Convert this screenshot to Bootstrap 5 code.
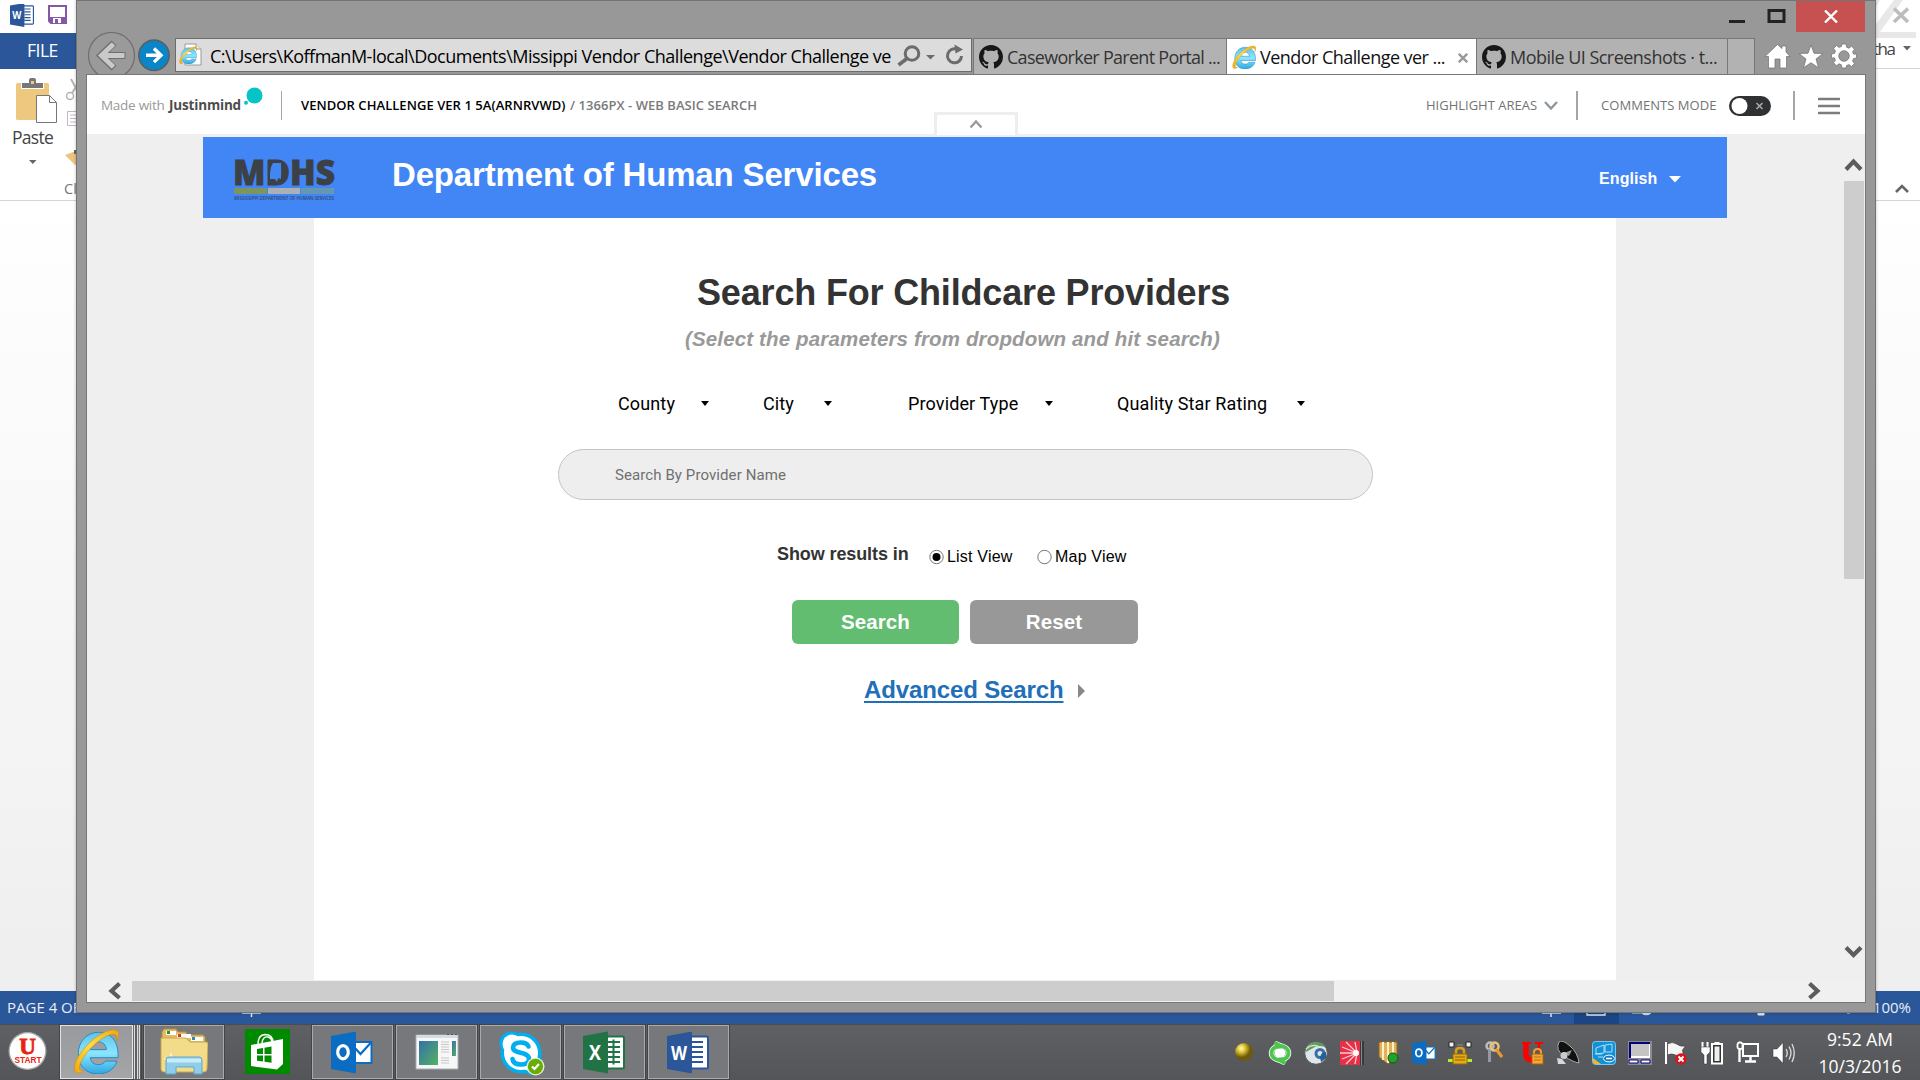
<!DOCTYPE html>
<html lang="en">
<head>
<meta charset="utf-8">
<title>Vendor Challenge ver 1 5a</title>
<link href="https://cdn.jsdelivr.net/npm/bootstrap@5.3.0/dist/css/bootstrap.min.css" rel="stylesheet">
<style>
html,body{width:1920px;height:1080px;overflow:hidden;margin:0}
body{font-family:"Open Sans","Noto Sans",sans-serif;background:#fff;color:#000}
svg{display:block;flex:none}
span,a,h1,h2,p{white-space:nowrap;margin:0}
.ari{font-family:"Liberation Sans",Arial,sans-serif}
.rob{font-family:Roboto,sans-serif}
/* word window behind */
.wordwin{width:1920px;height:1024px;background:linear-gradient(#fff 200px,#efefef 960px)}
.wtitle{height:33px;background:#fff;padding-left:9px}
.wlogo{margin:4px 13px 0 0}
.wsave{margin:5px 0 0}
.wfile{width:77px;height:36px;background:#2b579a;color:#fff;padding-left:27px;font-size:17.5px;line-height:35px;letter-spacing:-.5px}
.wribbon{height:132px;background:#fff;border-bottom:1px solid #d4d4d4}
.wribbon svg:first-child{margin-top:1px}
.wpaste{padding-left:12px;margin-top:-6px;height:26px;line-height:27px;font-size:17.5px;letter-spacing:-.73px;color:#444}
.wstatus{height:33px;background:#2a569a;color:#e9eef6;font-size:15px;line-height:33px;padding:0 9px 0 7px}
.wright{left:1876px;top:0;width:44px;height:201px}
.wpeek{left:230px;top:1012px}
/* browser window */
.iewin{left:76px;top:0;width:1800px;height:1013px;background:#989898;border:1px solid #747474;box-shadow:0 0 3px rgba(0,0,0,.25)}
.iecap{height:37px;padding-right:10px}
.ieclose{width:69px;height:31px;background:#c75050}
.ienav{height:36px;padding-left:11px}
.ieback{margin-top:-6px}
.addr{width:797px;height:34px;border:1px solid #6c6c6c;background:#dcdcdc;padding-left:3px}
.addr svg:first-child{margin-top:4px}
.addrtxt{width:683px;font-size:18px;line-height:35px;margin-left:7px;letter-spacing:-.485px}
.ietab{height:36px;border:1px solid #777;border-bottom:0;background:#b2b2b2;color:#333;font-size:18px;line-height:37px;padding-left:5px;width:252px;margin-left:-1px;letter-spacing:-.53px}
.ietab svg:first-child{margin:6px 4px 0 0}
.ietab.first{width:254px;margin-left:1px;letter-spacing:-.715px}
.ietab.on{width:251px;background:#fff;color:#111;letter-spacing:-.55px}
.ietab.stub{width:28px;padding:0}
.tabx{margin:14px 0 0 13px}
.iebody{margin:0 9px;height:929px;border:1px solid #777;background:#fff}
.jmbar{height:59px;background:#fff;font-size:13px;padding:2px 0 0 14px}
.jmlogo{width:180px;font-size:13.5px}
.jmdot{margin:-8px 0 0 2px}
.jm1{width:68px;color:#999;letter-spacing:-.27px}
.jm2{color:#4c4c4c;font-weight:700;letter-spacing:-.17px}
.jm3{font-weight:600;margin-left:19px;width:269px;letter-spacing:.055px}
.jm4{font-weight:600;color:#7a7a7a;width:856px;letter-spacing:.041px}
.jm5{color:#737373;width:118px}
.jm6{color:#737373;margin-left:23px;width:128px;letter-spacing:.052px}
.vline{width:1px;height:29px;background:#a5a5a5}
.vline2{width:2px;height:29px;background:#a5a5a5}
.colltab{left:934px;top:112px;width:84px;height:23px;border:3px solid #eee;border-bottom:0;background:#fff}
.canvas{height:846px;background:#efefef}
.bluebar{margin:3px 0 0 116px;width:1524px;height:81px;background:#4285f5;color:#fff}
.mdhs{margin:21px 0 0 31px}
.dept{font-weight:700;font-size:33px;line-height:44px;margin:16px 0 0 57px;width:1207px;letter-spacing:-.166px}
.lang{font-weight:700;font-size:16px;line-height:20px;margin:32px 0 0;width:70px;letter-spacing:.1px}
.sheet{margin-left:227px;width:1302px;height:762px;background:#fff}
.sheet h1{font-size:36px;line-height:44px;font-weight:700;color:#333;padding:53px 0 0 383px;letter-spacing:-.17px}
.sheet h2{font-size:20.5px;line-height:26px;font-weight:700;font-style:italic;color:#999;padding:11px 0 0 371px;letter-spacing:.146px}
.filters{margin:40px 0 0 304px;font-size:18px;line-height:24px;letter-spacing:.13px}
.srch{margin:33px 0 0 244px;width:815px;height:51px;border:1px solid #c4c4c4;border-radius:26px;background:#eee;color:#707070;font-size:15px;line-height:51px;padding:0 0 0 56px;letter-spacing:.09px}
.modes{margin:42px 0 0 463px;height:30px}
.modes svg{margin-top:7px}
.showin{font-weight:700;font-size:18px;line-height:24px;color:#333;width:152px;letter-spacing:-.1px}
.modes .opt{font-size:16px;line-height:24px;margin:3px 0 0 2px;letter-spacing:.2px;width:90px}
.acts{margin:28px 0 0 478px}
.actbtn{height:44px;border:0;border-radius:6px;color:#fff;font-weight:700;font-size:20.5px;line-height:36px;padding:0;text-align:center;letter-spacing:.1px}
.bsearch,.bsearch:hover{width:167px;background:#62bd70;margin-right:11px}
.breset,.breset:hover{width:168px;background:#989898}
.adv{margin:31px 0 0 550px}
.advlink{color:#1f70b8;font-weight:700;font-size:24px;line-height:30px;letter-spacing:-.13px;text-decoration:underline;text-decoration-thickness:2px;text-underline-offset:3px;text-decoration-skip-ink:none}
.advtri{margin:9px 0 0 15px}
.vscroll{width:21px;background:#efefef}
.hscroll{height:22px;background:#f0f0f0}
.thumb{background:#cdcdcd}
.vthumb{height:398px;width:20px}
.hthumb{width:1202px;height:20px;margin-right:472px}
/* taskbar */
.tbar{height:56px;background:linear-gradient(#5f6063,#545558);border-top:1px solid #4b4c4f}
.tbtn{width:81px;height:54px;margin-right:3px;background:#77787b;border:1px solid #a9aaac;outline:1px solid #434447;padding-left:18px}
.tbtn.cur{width:73px;margin:0;background:linear-gradient(#999a9d,#a4a5a7);border-color:#e4e4e4;padding:2px 0 0 12px}
.tbtn.expl{width:80px;margin-right:21px;padding:2px 0 0 15px}
.store{margin:4px 22px 0 0}
.tray{gap:12px;padding-top:16px}
.tclock{color:#fff;font-size:17.5px;line-height:27px;width:100px;margin:1px 10px 0 14px}
</style>
</head>
<body class="position-relative">

<svg width="0" height="0" class="position-absolute">
  <defs>
    <linearGradient id="gblue" x1="0" y1="0" x2="0" y2="1"><stop offset="0" stop-color="#5cc3ee"/><stop offset=".5" stop-color="#8ae6fd"/><stop offset="1" stop-color="#2ea7e2"/></linearGradient>
    <linearGradient id="ggold" x1="0" y1="1" x2="1" y2="0"><stop offset="0" stop-color="#f2a80c"/><stop offset=".5" stop-color="#ffdc4a"/><stop offset="1" stop-color="#f0a90f"/></linearGradient>
    <symbol id="ie" viewBox="0 0 48 48">
      <path d="M47 31H18c.6 4.800 4 7.200 8.300 7.200 3.400 0 6-1.200 7.500-3.700h12C43 43.500 35.500 48 26 48 14.500 48 5.500 40 5.500 27S14.500 4.500 26.500 4.500C39.500 4.500 48 14 47 31zM18.200 22.500h16.600c-.3-4.700-3.600-8-8.200-8-4.700 0-7.800 3-8.400 8z" fill="url(#gblue)" stroke="#2787bd" stroke-width="1"/>
      <path d="M11 45C6.500 48.500 2.300 47.500 1.500 43 .5 35 9.500 21.500 21 12 32 3 43.500-.5 46.800 3.500c1.600 2.300.9 6-.9 10 .2-3.500.2-5.500-1.500-6.500C40.500 5 32 9 24 16 14 24.500 6.500 36 6.800 41.500c.1 2.800 2 3.800 4.200 3.500z" fill="url(#ggold)" stroke="#c78a10" stroke-width=".6"/>
    </symbol>
    <symbol id="gh" viewBox="0 0 16 16"><path fill="#171717" d="M8 0C3.580 0 0 3.580 0 8c0 3.540 2.290 6.530 5.470 7.590.4.07.55-.17.55-.38 0-.19-.01-.82-.01-1.490-2.010.37-2.530-.49-2.690-.94-.09-.23-.48-.94-.82-1.130-.28-.15-.68-.52-.01-.53.63-.01 1.080.58 1.230.82.72 1.210 1.870.87 2.330.66.07-.52.28-.87.51-1.070-1.780-.2-3.640-.89-3.640-3.950 0-.87.31-1.590.82-2.150-.08-.2-.36-1.020.08-2.120 0 0 .67-.21 2.200.82.64-.18 1.320-.27 2-.27s1.360.09 2 .27c1.530-1.040 2.200-.82 2.200-.82.44 1.100.16 1.920.08 2.120.51.56.82 1.270.82 2.150 0 3.070-1.870 3.750-3.650 3.950.29.25.54.73.54 1.480 0 1.070-.01 1.930-.01 2.200 0 .21.15.46.55.38A8.010 8.010 0 0 0 16 8c0-4.420-3.580-8-8-8z"/></symbol>
    <symbol id="outl" viewBox="0 0 42 42"><path d="M24 10.500h16.500v21H24z" fill="#fff" stroke="#0a6fc4" stroke-width="2"/><path d="M24.500 17l5 5.500L40 11" fill="none" stroke="#0a6fc4" stroke-width="2.200"/><path d="M0 4.500L25 0v42L0 37.500z" fill="#0a6dc3"/><ellipse cx="12" cy="20.700" rx="5.300" ry="6.600" fill="none" stroke="#fff" stroke-width="3.200"/></symbol>
    <symbol id="word" viewBox="0 0 42 42"><path d="M24 5h15.500q1.500 0 1.500 1.500v29q0 1.500-1.500 1.500H24z" fill="#fff" stroke="#2b579a" stroke-width="2"/><path d="M25 10.500h11M25 15.500h11M25 20.500h11M25 25.500h11M25 30.500h11" stroke="#2b579a" stroke-width="2"/><path d="M0 4.500L25 0v42L0 37.500z" fill="#2b579a"/><text x="4" y="28.500" font-family="Open Sans" font-weight="700" font-size="19" fill="#fff" textLength="16" lengthAdjust="spacingAndGlyphs">W</text></symbol>
    <linearGradient id="gpic" x1="0" y1="0" x2="1" y2="1"><stop offset="0" stop-color="#3570a8"/><stop offset="1" stop-color="#52b262"/></linearGradient>
    <radialGradient id="gau" cx=".35" cy=".3"><stop offset="0" stop-color="#fffbd0"/><stop offset=".4" stop-color="#e6cb3a"/><stop offset="1" stop-color="#6e5a08"/></radialGradient>
  </defs>
</svg>

<!-- Word window -->
<div class="wordwin d-flex flex-column">
  <div class="wtitle d-flex align-items-start">
    <svg width="26" height="26" class="wlogo"><use href="#word" x="1" y="-1" width="24" height="24"/></svg>
    <svg width="19" height="19" viewBox="0 0 19 19" class="wsave"><path d="M1 1h17v17H3l-2-2z" fill="#fff" stroke="#8558a6" stroke-width="2"/><path d="M1 12h17v6H3l-2-2z" fill="#8558a6"/><path d="M5 13h8v5H5z" fill="#fff"/><path d="M7 14h3v4H7z" fill="#8558a6"/></svg>
  </div>
  <div class="wfile"><span>FILE</span></div>
  <div class="wribbon">
    <svg width="77" height="60" viewBox="0 0 77 60">
      <rect x="16" y="13" width="33" height="37" rx="1.500" fill="#edc87e"/><path d="M21 13h6v-3q0-2 2-2h7q2 0 2 2v3h6v6H21z" fill="#fff"/><path d="M22 13h7v-3q0-2 2-2h3q2 0 2 2v3h7v5H22z" fill="#777"/><path d="M31 11h3v3h-3z" fill="#edc87e"/>
      <path d="M36.500 25.500h13l7 7v20h-20z" fill="#fff" stroke="#777"/><path d="M49.500 25.500v7h7" fill="none" stroke="#777"/>
      <circle cx="70" cy="26" r="3.500" fill="none" stroke="#b5b5b5" stroke-width="1.500"/><path d="M71 9l7 13M79 12l-7 11" stroke="#b5b5b5" stroke-width="2"/>
      <path d="M67.500 41.500h12v14h-12zM70 45h6M70 48.500h8M70 52h8" fill="none" stroke="#c0b8c4"/>
    </svg>
    <div class="wpaste"><span>Paste</span></div>
    <svg width="77" height="49" viewBox="0 0 77 49"><path d="M29 10h7.500l-3.700 4z" fill="#666"/><path d="M65 5l8-3 4 1v12h-2z" fill="#edc47e"/><path d="M74 0h4v4h-4z" fill="#666"/><text x="64" y="43.500" font-size="14.500" fill="#777" font-family="Open Sans">Cl</text></svg>
  </div>
  <div class="flex-grow-1"></div>
  <div class="wstatus d-flex justify-content-between"><span>PAGE 4 OF 5</span><span>100%</span></div>
</div>
<svg class="position-absolute wright" viewBox="0 0 44 201">
  <path d="M0 32h40v6H0zM0 24L18 0h9L4 32H0zM0 0h4L0 7z" fill="#e8e8e8"/>
  <path d="M18 8.500L32 22M32 8.500L18 22" stroke="#bdbdbd" stroke-width="3.600"/>
  <text x="-3" y="55" font-family="Open Sans" font-size="17" fill="#444" textLength="23">tha</text>
  <path d="M27 46h8l-4 4.500z" fill="#666"/><path d="M0 68.500h44" stroke="#d4d4d4"/>
  <path d="M20 192l6-6 6 6" fill="none" stroke="#666" stroke-width="2.600"/>
</svg>
<svg class="position-absolute wpeek" width="1690" height="12"><path d="M12 1h19M21.500 1v4M1312 1h19M1321 1v4" stroke="#dfe7f3" stroke-width="1.500"/><path d="M1344 0h45v12h-45z" fill="#1b4583"/><path d="M1357 0v3h18V0" fill="none" stroke="#dfe7f3" stroke-width="1.300"/><path d="M1402 1h10M1411 0a6 5 0 0 0 10 1M1528 0h6v3h-6zM1617 1h3" fill="#dfe7f3" stroke="#dfe7f3"/></svg>

<!-- Browser window -->
<div class="iewin position-absolute">
  <div class="iecap d-flex justify-content-end align-items-start">
    <svg width="80" height="31" viewBox="0 0 80 31"><path d="M13 20.500h16" stroke="#222" stroke-width="3"/><rect x="53" y="9.500" width="15" height="11" fill="none" stroke="#222" stroke-width="3"/></svg>
    <div class="ieclose d-flex align-items-center justify-content-center"><svg width="14" height="13" viewBox="0 0 14 13"><path d="M1 .5l12 12M13 .5l-12 12" stroke="#fff" stroke-width="2.400"/></svg></div>
  </div>
  <div class="ienav d-flex align-items-start">
    <svg width="48" height="42" viewBox="0 0 48 42" class="ieback"><circle cx="23.500" cy="23.500" r="23" fill="#9a9a9a" stroke="#6e6e6e" stroke-width="1.200"/><path d="M37.500 23.500H14M26 11L13 23.500 26 36" fill="none" stroke="#6e6e6e" stroke-width="7"/><path d="M36.500 23.500H13.500M25.500 12L13.500 23.500l12 11.500" fill="none" stroke="#c9c9c9" stroke-width="5"/></svg>
    <svg width="39" height="36" viewBox="0 0 39 36"><circle cx="18" cy="17.300" r="15.200" fill="#0a85c7" stroke="#5a5f63" stroke-width="1.600"/><path d="M10 17.300h14M18 10.500l7 6.800-7 6.800" fill="none" stroke="#fff" stroke-width="3.400"/></svg>
    <div class="addr d-flex align-items-start">
      <svg width="24" height="26" viewBox="0 0 24 26"><path d="M6 1h11l5 5v16H6z" fill="#fff" stroke="#9a9a9a"/><path d="M17 1v5h5" fill="#eee" stroke="#9a9a9a"/><use href="#ie" x="0" y="3" width="18" height="18"/></svg>
      <div class="addrtxt"><span>C:\Users\KoffmanM-local\Documents\Missippi Vendor Challenge\Vendor Challenge ve</span></div>
      <svg width="76" height="32" viewBox="0 0 76 32" class="ms-auto"><circle cx="17" cy="14.500" r="6.800" fill="none" stroke="#6c6c6c" stroke-width="3"/><path d="M12 19.500L3.500 26" stroke="#6c6c6c" stroke-width="3.600"/><path d="M31 16h9l-4.500 4.500z" fill="#6c6c6c"/><path d="M62.500 10.500A7 7 0 1 0 66.500 17" fill="none" stroke="#6c6c6c" stroke-width="3"/><path d="M59.500 5.500l8.500 5-7.500 4z" fill="#6c6c6c"/></svg>
    </div>
    <div class="ietab first d-flex"><svg width="24" height="24"><use href="#gh" width="24" height="24"/></svg><span>Caseworker Parent Portal ...</span></div>
    <div class="ietab on d-flex"><svg width="24" height="24"><use href="#ie" width="24" height="24"/></svg><span>Vendor Challenge ver ...</span><svg width="10" height="10" viewBox="0 0 10 10" class="tabx"><path d="M.8.8l8.400 8.400M9.200.8L.8 9.200" stroke="#999" stroke-width="2.400"/></svg></div>
    <div class="ietab d-flex"><svg width="24" height="24"><use href="#gh" width="24" height="24"/></svg><span>Mobile UI Screenshots · t...</span></div>
    <div class="ietab stub"></div>
    <svg width="110" height="36" viewBox="0 0 110 36" fill="#fff" stroke="#6e6e6e" stroke-width=".7">
      <path d="M22.500 6.500l4.500 4V8h4v6l4 4.500h-3.500V30h-6.500v-9h-5v9h-6.500V18.500H10z"/>
      <path d="M56 7l3 8.300 9 .2-7 5.500 2.500 8.700L56 24.700l-7.500 5 2.500-8.700-7-5.500 9-.2z"/>
      <g transform="translate(89 18)"><path d="M-2-12h4l.6 3.200 2.300 1 2.700-1.900 2.900 2.900-1.900 2.700 1 2.300L12.500-2v4l-3 .6-1 2.300 1.900 2.700-2.900 2.900-2.700-1.900-2.300 1L2 12h-4l-.6-3.200-2.300-1-2.700 1.900-2.900-2.900 1.900-2.700-1-2.300L-12.500 2v-4l3-.6 1-2.300-1.900-2.700 2.900-2.900 2.700 1.900 2.300-1z"/><circle r="5.300" fill="#989898"/></g>
    </svg>
  </div>

  <div class="iebody">
    <div class="jmbar d-flex align-items-center">
      <div class="jmlogo d-flex"><span class="jm1">Made with</span><span class="jm2">Justinmind</span>
      <svg width="20" height="18" viewBox="0 0 20 18" class="jmdot"><circle cx="11.500" cy="8.500" r="8" fill="#06c3c5"/><circle cx="3" cy="15.800" r="2" fill="#06c3c5"/></svg></div>
      <div class="vline"></div>
      <span class="jm3">VENDOR CHALLENGE VER 1 5A(ARNRVWD)</span>
      <span class="jm4">/ 1366PX - WEB BASIC SEARCH</span>
      <span class="jm5">HIGHLIGHT AREAS</span>
      <svg width="14" height="10" viewBox="0 0 14 10"><path d="M1 1l6 6.500L13 1" fill="none" stroke="#8f979c" stroke-width="2.400"/></svg>
      <div class="vline2" style="margin-left:18px"></div>
      <span class="jm6">COMMENTS MODE</span>
      <svg width="42" height="20" viewBox="0 0 42 20"><rect width="42" height="20" rx="10" fill="#2f3133"/><circle cx="10.500" cy="10" r="8" fill="#fff"/><path d="M27.500 7l6 6M33.500 7l-6 6" stroke="#aaa" stroke-width="1.600"/></svg>
      <div class="vline2" style="margin-left:22px"></div>
      <svg width="22" height="18" viewBox="0 0 22 18" style="margin-left:23px"><path d="M1 2h20M1 9h20M1 16h20" stroke="#7c7c7c" stroke-width="2.600" stroke-linecap="round"/></svg>
    </div>
    <div class="d-flex">
      <div class="canvas flex-grow-1 overflow-hidden">
        <div class="bluebar d-flex">
          <svg width="101" height="44" viewBox="0 0 101 44" class="mdhs">
            <text x="-1" y="27" font-family="Open Sans" font-weight="800" font-size="36" fill="#3b4145" stroke="#3b4145" stroke-width=".8" textLength="102" lengthAdjust="spacingAndGlyphs">MDHS</text>
            <path d="M39 5h8v16l-3-1-1 4-2-3h-5v-6l1-6z" fill="#4285f5"/>
            <path d="M0 30h33v6H0z" fill="#7c9460"/><path d="M34 30h32v6H34z" fill="#aab0b4"/><path d="M67 30h33v6H67z" fill="#6497b2"/>
            <text x="0" y="41.500" font-family="Open Sans" font-size="4.500" font-weight="600" fill="#2f4770" textLength="100" lengthAdjust="spacingAndGlyphs">MISSISSIPPI DEPARTMENT OF HUMAN SERVICES</text>
          </svg>
          <span class="ari dept">Department of Human Services</span>
          <span class="ari lang">English</span>
          <svg width="12" height="46" class="ms-0"><path d="M0 39h12l-6 6.500z" fill="#fff"/></svg>
        </div>
        <div class="sheet">
          <h1 class="ari">Search For Childcare Providers</h1>
          <h2 class="ari">(Select the parameters from dropdown and hit search)</h2>
          <div class="filters rob d-flex">
            <span style="width:83px">County</span><svg width="8" height="24" style="margin-right:54px"><path d="M0 9h8l-4 5z"/></svg>
            <span style="width:61px">City</span><svg width="8" height="24" style="margin-right:76px"><path d="M0 9h8l-4 5z"/></svg>
            <span style="width:137px">Provider Type</span><svg width="8" height="24" style="margin-right:64px"><path d="M0 9h8l-4 5z"/></svg>
            <span style="width:180px">Quality Star Rating</span><svg width="8" height="24"><path d="M0 9h8l-4 5z"/></svg>
          </div>
          <div class="srch rob">Search By Provider Name</div>
          <div class="modes ari d-flex">
            <span class="showin">Show results in</span>
            <svg width="16" height="16" viewBox="0 0 16 16"><circle cx="7.500" cy="8" r="6.700" fill="#fff" stroke="#777"/><circle cx="7.500" cy="8" r="4" fill="#000"/></svg>
            <span class="opt">List View</span>
            <svg width="16" height="16" viewBox="0 0 16 16"><circle cx="7.500" cy="8" r="6.700" fill="#fff" stroke="#777"/></svg>
            <span class="opt">Map View</span>
          </div>
          <div class="acts d-flex">
            <button class="btn actbtn bsearch ari">Search</button>
            <button class="btn actbtn breset ari">Reset</button>
          </div>
          <div class="adv d-flex"><a class="advlink ari" href="#">Advanced Search</a><svg width="8" height="14" class="advtri"><path d="M0 0l7 7-7 7z" fill="#888"/></svg></div>
        </div>
      </div>
      <div class="vscroll d-flex flex-column">
        <svg width="21" height="47" viewBox="0 0 21 47"><path d="M2 35.500l7.500-8 7.500 8" fill="none" stroke="#5c5c5c" stroke-width="4.200"/></svg>
        <div class="thumb vthumb"></div>
        <svg width="21" height="40" viewBox="0 0 21 40" class="mt-auto"><path d="M2 7.500L9.500 15 17 7.500" fill="none" stroke="#5c5c5c" stroke-width="4.200"/></svg>
      </div>
    </div>
    <div class="hscroll d-flex align-items-center">
      <svg width="45" height="22" viewBox="0 0 45 22"><path d="M32.500 3.500l-8 7.500 8 7" fill="none" stroke="#5c5c5c" stroke-width="4.200"/></svg>
      <div class="thumb hthumb"></div>
      <svg width="20" height="22" viewBox="0 0 20 22"><path d="M3.500 3.500l8 7.500-8 7" fill="none" stroke="#5c5c5c" stroke-width="4.200"/></svg>
    </div>
  </div>
</div>
<div class="colltab position-absolute d-flex justify-content-center"><svg width="14" height="15" viewBox="0 0 14 15"><path d="M1.500 12.500L7 6.500l5.500 6" fill="none" stroke="#959ca1" stroke-width="2.400"/></svg></div>

<!-- Taskbar -->
<div class="tbar d-flex align-items-start">
  <svg width="60" height="54" viewBox="0 0 60 54"><circle cx="27.500" cy="26" r="19" fill="#aaa"/><circle cx="27.500" cy="26" r="17.700" fill="#fff"/><text x="27.500" y="29" text-anchor="middle" font-family="Liberation Serif" font-weight="700" font-size="23" fill="#e8230f" stroke="#e8230f" stroke-width=".8">U</text><text x="14.500" y="38" font-family="Liberation Sans" font-weight="700" font-size="8.500" fill="#e8230f" textLength="27" lengthAdjust="spacingAndGlyphs">START</text></svg>
  <div class="tbtn cur"><svg width="47" height="47"><use href="#ie" width="46" height="46"/></svg></div>
  <svg width="11" height="54"><path d="M1.500 0v54M4.500 0v54" stroke="#ddd" stroke-width="1.500"/><path d="M3 0v54M8.500 0v54" stroke="#444" stroke-width="1"/><path d="M6.500 0v54" stroke="#ddd"/></svg>
  <div class="tbtn expl">
    <svg width="48" height="48" viewBox="0 0 48 48"><path d="M2 4l2-3h12l2 3h8l1 3h16l2 2v10H2z" fill="#e2bc62" stroke="#b8923c"/><path d="M6 3h10v4H6z" fill="#fff"/><path d="M17 6h14v4H17z" fill="#fff"/><path d="M31 9h12v4H31z" fill="#fff"/><path d="M7 3h3v3H7z" fill="#2d8a3c"/><path d="M18 6h3v3h-3z" fill="#d83a1f"/><path d="M32 9h3v3h-3z" fill="#2a88c8"/><path d="M1 10h25l4 4h16q2 0 2 2l-1 25q0 3-3 3H4q-3 0-3-3z" fill="#f2dc8a" stroke="#c9a751"/><path d="M11 24l2 6 6 1-6 2-2 6-2-6-6-2 6-1z" fill="#fffbe8" opacity=".8"/><path d="M6 46V32q0-3 3-3h30q3 0 3 3v14h-8v-7H16v7z" fill="#8fcdea" stroke="#5da9cc"/><path d="M7 30.500h34v4H7z" fill="#c9ebf8"/></svg>
  </div>
  <svg width="45" height="45" viewBox="0 0 45 45" class="store"><path d="M0 0h45v45H0z" fill="#008a00"/><path d="M6 16l32-6v25l-6 5.500L6 37z" fill="#fff"/><path d="M13 15q0-9 7-9.500 8 0 8 8M17 14q1-7 6-6 4 1 4 6" fill="none" stroke="#fff" stroke-width="1.400"/><path d="M12 20l6-1v6h-6zM19.500 18.700l7-1.200V25h-7zM12 26.500h6v6l-6-.8zM19.500 26.500h7v7.300l-7-1z" fill="#008a00"/></svg>
  <div class="tbtn pt-1"><svg width="42" height="44" class="mt-0"><use href="#outl" y="1.500" width="42" height="42"/></svg></div>
  <div class="tbtn pt-2"><svg width="44" height="37" viewBox="0 0 44 37"><path d="M1 1h42v34H1z" fill="#f7f7f7" stroke="#a9adb5"/><path d="M2 1h40v3H2z" fill="#d5dce4"/><path d="M32 .5h2M36 .5h2M40 .5h2" stroke="#3c5670"/><path d="M4 7h19v24H4z" fill="url(#gpic)"/><path d="M26 8h8M26 10.500h8M26 13h8M26 15.500h8M26 18h8M26 24h8M26 26.500h8M26 29h8" stroke="#c8c8c8"/><path d="M37 7h4v15h-4z" fill="url(#gpic)"/></svg></div>
  <div class="tbtn pt-1"><svg width="48" height="48" viewBox="0 0 48 48"><circle cx="12" cy="13" r="11.500" fill="#00aff0"/><circle cx="32" cy="33" r="11.500" fill="#00aff0"/><circle cx="22" cy="23" r="20.500" fill="#00aff0"/><circle cx="13" cy="14" r="9.500" fill="#fff"/><circle cx="31" cy="32" r="9" fill="#fff"/><circle cx="22" cy="23" r="17" fill="#fff"/><path d="M29.500 16.500q-1.500-4-8-4-7 0-7.500 5c0 7 16 3.500 16 11.500 0 4-4 5.500-8 5.500-5.500 0-8-2.500-8.500-5.500" fill="none" stroke="#00aff0" stroke-width="4.600" stroke-linecap="round"/><circle cx="36.500" cy="36.500" r="9" fill="#e8f2d8"/><circle cx="36.500" cy="36.500" r="7.700" fill="#6aab08"/><path d="M33 36.500l2.500 2.500 4.500-5" fill="none" stroke="#fff" stroke-width="2.200"/></svg></div>
  <div class="tbtn pt-1"><svg width="42" height="44" viewBox="0 -1.500 42 44"><path d="M24 5h15.500q1.500 0 1.500 1.500v29q0 1.500-1.500 1.500H24z" fill="#fff" stroke="#217346" stroke-width="2"/><path d="M25 10.500h12M25 15.500h12M25 20.500h12M25 25.500h12M25 30.500h12M30.500 8v25" stroke="#217346" stroke-width="2"/><path d="M0 4.500L25 0v42L0 37.500z" fill="#217346"/><text x="6" y="28.500" font-family="Open Sans" font-weight="700" font-size="22" fill="#fff" textLength="12" lengthAdjust="spacingAndGlyphs">X</text></svg></div>
  <div class="tbtn pt-1"><svg width="42" height="44"><use href="#word" y="1.500" width="42" height="42"/></svg></div>

  <div class="tray ms-auto d-flex">
    <svg width="24" height="24" viewBox="0 0 24 24"><circle cx="12" cy="11" r="9" fill="url(#gau)"/></svg>
    <svg width="24" height="24" viewBox="0 0 24 24"><g fill="none" stroke="#f4fff4" stroke-width="5.500"><ellipse cx="12" cy="12" rx="8.500" ry="7"/><path d="M6.500 2l6 3-3 5M17.500 22l-6-3 3-5"/></g><g fill="none" stroke="#4fc44f" stroke-width="3.800"><ellipse cx="12" cy="12" rx="8.500" ry="7"/><path d="M6.500 1.500l6 3.500-2 4M17.500 22.500l-6-3.500 2-4"/></g><ellipse cx="12" cy="12" rx="5.500" ry="4.500" fill="#fff"/></svg>
    <svg width="24" height="24" viewBox="0 0 24 24"><circle cx="12" cy="12" r="11.300" fill="#dde6ea" stroke="#555"/><path d="M2 10Q4 1 13 1q7 1 8 5-6-2-10 0T2 11z" fill="#5f9a57"/><path d="M2 8q5-5 12-3" stroke="#cfe0d0" stroke-width="1.500" fill="none"/><circle cx="16" cy="12.500" r="4" fill="none" stroke="#3d6ea0" stroke-width="3"/><path d="M18 12l4-1v6l-5 4-1-5z" fill="#255f9c"/></svg>
    <svg width="24" height="24" viewBox="0 0 24 24"><path d="M0 0h20v24H0z" fill="#e92f47"/><path d="M0 12h18M6 1l11 11L6 23M15 1l2 11-2 11M2 6l15 6-15 6" stroke="#fff" stroke-opacity=".75" stroke-width="1.300" fill="none"/><circle cx="16" cy="12" r="3" fill="#fff"/><path d="M20 0h4v24h-4z" fill="#3a3a3a"/><path d="M21.500 0v24" stroke="#888"/></svg>
    <svg width="24" height="24" viewBox="0 0 24 24"><path d="M3 1h18v14l-9 8-9-7z" fill="#e0b25e" stroke="#8e6420"/><path d="M7 1v18M12 1v21M17 1v16" stroke="#fff0c0" stroke-width="2"/><circle cx="17" cy="17" r="5" fill="#1fa32a" stroke="#0c5a12"/></svg>
    <svg width="24" height="24"><use href="#outl" width="24" height="24"/></svg>
    <svg width="24" height="24" viewBox="0 0 24 24"><path d="M0 18h24v3H0z" fill="#b8ee20"/><path d="M1 1h5v5H1zM18 1h5v5h-5z" fill="#eee" stroke="#222"/><path d="M9 4h6" stroke="#888"/><path d="M8 13v-3q0-3 4-3t4 3v3" fill="none" stroke="#d8a018" stroke-width="2.500"/><path d="M5 13h14v10H5z" fill="#e5ac16" stroke="#966a06"/><path d="M7 16h10M7 19h10" stroke="#8a6206"/></svg>
    <svg width="24" height="24" viewBox="0 0 24 24"><circle cx="6" cy="5" r="3.500" fill="none" stroke="#b8bcc4" stroke-width="2.500"/><path d="M5.500 8v13" stroke="#9499a2" stroke-width="3" fill="none"/><circle cx="10.500" cy="5.500" r="4" fill="none" stroke="#eac37c" stroke-width="2.500"/><path d="M12 8l6 8" stroke="#e89a2c" stroke-width="3.200"/></svg>
    <svg width="24" height="24" viewBox="0 0 24 24"><path d="M2 2h9M15 2h8" stroke="#f00" stroke-width="2"/><path d="M6 2v11q0 6 6 6h2" stroke="#f00" stroke-width="5.500" fill="none"/><path d="M19 2v8" stroke="#f00" stroke-width="2.500"/><path d="M14 14v-3q0-3 3.500-3T21 11v3" fill="none" stroke="#f2a02c" stroke-width="2"/><path d="M12 13h11v10H12z" fill="#f5a635" stroke="#a8640c"/><path d="M14 16h7M14 19h7" stroke="#b8720f"/></svg>
    <svg width="24" height="24" viewBox="0 0 24 24"><path d="M3 1q-4 8 5 14t15 7Q22 12 14 5T3 1z" fill="#111" stroke="#aaa"/><path d="M8 12l8-3-3 6z" fill="#999"/><circle cx="8" cy="14.500" r="3.500" fill="#ccc"/><path d="M1 17l5 1 4 5H2z" fill="#d8d8d8"/></svg>
    <svg width="24" height="24" viewBox="0 0 24 24"><rect x=".5" y=".5" width="23" height="23" rx="3" fill="#1192d6" stroke="#7ec6ee"/><path d="M1 17l8 6H3q-2 0-2-2z" fill="#f1b52c"/><path d="M4 7l8-3v8l-8 1zM13 4l7-1v8h-7zM3 13h7M6 16h5" fill="none" stroke="#d6f0fc" stroke-width=".8"/><ellipse cx="17" cy="17.500" rx="5.500" ry="3.400" fill="#1178bd" stroke="#fff"/><path d="M14 17.500h6" stroke="#fff" stroke-width="1.600"/></svg>
    <svg width="24" height="24" viewBox="0 0 24 24"><path d="M0 0h24v24H0z" fill="#8c8c8c"/><path d="M1 1h21v16H1z" fill="#000080"/><path d="M3 3h19v14H3z" fill="#fff"/><path d="M3 3h18v12H3z" fill="#c4c4c4"/><path d="M1 19h9v3H1zM13 19h9v3h-9z" fill="#fff" stroke="#000080"/></svg>
    <svg width="24" height="24" viewBox="0 0 24 24"><path d="M2 1v22" stroke="#fff" stroke-width="2"/><path d="M3.500 3q5-3 9 0t9 2l-3 4 1 6q-4 1-8-1t-8 0z" fill="#f5f5f5" stroke="#333" stroke-width=".6"/><circle cx="17" cy="18" r="5.800" fill="#d8151c"/><path d="M14.500 15.500l5 5M19.500 15.500l-5 5" stroke="#fff" stroke-width="2"/></svg>
    <svg width="24" height="24" viewBox="0 0 24 24"><path d="M2.500 1v5M7.500 1v5" stroke="#fff" stroke-width="2"/><path d="M1 6h9v5l-3 3v9H4v-9l-3-3z" fill="#fff" stroke="#333" stroke-width=".5"/><rect x="12" y="3" width="10" height="19.500" fill="#333" stroke="#fff" stroke-width="2"/><path d="M14.500 1h5v2h-5z" fill="#fff"/><path d="M14.500 5.500h5V20h-5z" fill="#eee"/></svg>
    <svg width="24" height="24" viewBox="0 0 24 24"><path d="M7 3h15v12H7z" fill="#5a5b5e" stroke="#fff" stroke-width="2"/><path d="M14.500 15v5M9 20.500h11" stroke="#fff" stroke-width="2.400"/><rect x="1.500" y="1.500" width="5" height="6.500" rx="2" fill="#5a5b5e" stroke="#fff" stroke-width="1.800"/><path d="M3.500 8v13" stroke="#fff" stroke-width="2.400"/></svg>
    <svg width="24" height="24" viewBox="0 0 24 24"><path d="M1 8h4l6-6.500v21L5 16H1z" fill="#fff" stroke="#333" stroke-width=".5"/><path d="M14 8q2.500 4 0 8M17 5.500q4 6.500 0 13M20 3q4.500 9 0 18" fill="none" stroke="#ddd" stroke-width="1.300"/></svg>
  </div>
  <div class="tclock text-center d-flex flex-column"><span>9:52 AM</span><span>10/3/2016</span></div>
</div>

<script src="https://cdn.jsdelivr.net/npm/bootstrap@5.3.0/dist/js/bootstrap.bundle.min.js"></script>
</body>
</html>
